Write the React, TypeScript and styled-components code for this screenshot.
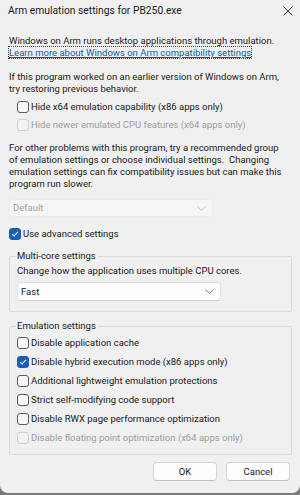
import React from 'react';
import styled, { createGlobalStyle } from 'styled-components';

const GlobalStyle = createGlobalStyle`
  html, body {
    margin: 0;
    padding: 0;
    background: #7a7a7a;
  }
  * {
    box-sizing: border-box;
  }
`;

const Window = styled.div`
  width: 300px;
  height: 493px;
  background: #f0f0f0;
  border-radius: 0 0 8px 8px;
  font-family: Roboto, 'Noto Sans', sans-serif;
  font-size: 9.5px;
  line-height: 12px;
  color: #1a1a1a;
  display: flex;
  flex-direction: column;
  overflow: hidden;
`;

const TitleBar = styled.div`
  height: 31px;
  flex: none;
  display: flex;
  align-items: flex-start;
  justify-content: space-between;
  padding: 5px 7px 0 8px;
`;

const Title = styled.div`
  font-size: 10.3px;
  line-height: 12px;
`;

const Close = styled.svg`
  width: 10px;
  height: 10px;
  margin-top: 1px;
`;

const Body = styled.div`
  padding: 4px 9px 0 9px;
  display: flex;
  flex-direction: column;
  flex: 1;
  & > * {
    flex-shrink: 0;
  }
`;

const Para = styled.p<{ $gap?: number }>`
  margin: 0;
  margin-top: ${(p) => p.$gap ?? 0}px;
  white-space: nowrap;
`;

const Link = styled.a`
  color: #0a5fb4;
  text-decoration: underline;
  outline: 1px dotted #444;
  outline-offset: 0;
  display: inline-block;
  line-height: 11px;
`;

const Row = styled.label<{ $indent?: number; $gap?: number; $disabled?: boolean }>`
  display: flex;
  align-items: center;
  gap: 2px;
  height: 14px;
  margin-left: ${(p) => p.$indent ?? 0}px;
  margin-top: ${(p) => p.$gap ?? 0}px;
  color: ${(p) => (p.$disabled ? '#9d9d9d' : '#1a1a1a')};
  white-space: nowrap;
`;

const Box = styled.span<{ $checked?: boolean; $disabled?: boolean }>`
  width: 12px;
  height: 12px;
  flex: none;
  border-radius: 3px;
  border: 1px solid
    ${(p) => (p.$checked ? '#1c5fb8' : p.$disabled ? '#cfcfcf' : '#5c5c5c')};
  background: ${(p) => (p.$checked ? '#1c5fb8' : p.$disabled ? '#f3f3f3' : '#f7f7f7')};
  display: flex;
  align-items: center;
  justify-content: center;
`;

const Select = styled.div<{ $disabled?: boolean; $indent?: number; $gap?: number; $h?: number }>`
  width: 204px;
  height: ${(p) => p.$h ?? 18}px;
  margin-left: ${(p) => p.$indent ?? 0}px;
  margin-top: ${(p) => p.$gap ?? 0}px;
  background: ${(p) => (p.$disabled ? '#f6f6f6' : '#fdfdfd')};
  border: 1px solid ${(p) => (p.$disabled ? '#ececec' : '#e2e2e2')};
  border-bottom-color: ${(p) => (p.$disabled ? '#ececec' : '#cfcfcf')};
  border-radius: 3px;
  color: ${(p) => (p.$disabled ? '#a3a3a3' : '#1a1a1a')};
  display: flex;
  align-items: center;
  justify-content: space-between;
  padding: 0 6px 0 3px;
`;

const Group = styled.fieldset<{ $gap?: number; $h: number }>`
  margin: ${(p) => p.$gap ?? 0}px 0 0 0;
  padding: 0 0 0 7px;
  height: ${(p) => p.$h}px;
  width: 283px;
  border: 1px solid #dadada;
  border-radius: 2px;
  min-width: 0;
`;

const Legend = styled.legend`
  padding: 0 2px 0 1px;
  margin-left: -1px;
  line-height: 12px;
`;

const Buttons = styled.div`
  display: flex;
  justify-content: flex-end;
  gap: 9px;
  margin-top: 7px;
  padding-right: 1px;
`;

const Button = styled.button`
  width: 64px;
  height: 19px;
  background: #fdfdfd;
  border: 1px solid #d6d6d6;
  border-bottom-color: #c2c2c2;
  border-radius: 4px;
  font: inherit;
  color: #1a1a1a;
  padding: 0;
`;

const Check = () => (
  <svg width="8" height="8" viewBox="0 0 8 8">
    <path d="M1.2 4.2 L3.1 6 L6.8 1.8" fill="none" stroke="#fff" strokeWidth="1.1" />
  </svg>
);

const Chevron = ({ color }: { color: string }) => (
  <svg width="9" height="5" viewBox="0 0 9 5">
    <path d="M0.5 0.5 L4.5 4.3 L8.5 0.5" fill="none" stroke={color} strokeWidth="0.9" />
  </svg>
);

const CheckRow: React.FC<{
  label: string;
  checked?: boolean;
  disabled?: boolean;
  indent?: number;
  gap?: number;
}> = ({ label, checked, disabled, indent, gap }) => (
  <Row $indent={indent} $gap={gap} $disabled={disabled}>
    <Box $checked={checked} $disabled={disabled}>
      {checked && <Check />}
    </Box>
    <span>{label}</span>
  </Row>
);

const emulationOptions = [
  { label: 'Disable application cache' },
  { label: 'Disable hybrid execution mode (x86 apps only)', checked: true },
  { label: 'Additional lightweight emulation protections' },
  { label: 'Strict self-modifying code support' },
  { label: 'Disable RWX page performance optimization' },
  { label: 'Disable floating point optimization (x64 apps only)', disabled: true },
];

export default function App() {
  return (
    <>
      <GlobalStyle />
      <Window>
        <TitleBar>
          <Title>Arm emulation settings for PB250.exe</Title>
          <Close viewBox="0 0 10 10">
            <path d="M0.5 0.5 L9.5 9.5 M9.5 0.5 L0.5 9.5" stroke="#222" strokeWidth="0.9" />
          </Close>
        </TitleBar>
        <Body>
          <Para>Windows on Arm runs desktop applications through emulation.</Para>
          <div>
            <Link>Learn more about Windows on Arm compatibility settings</Link>
          </div>
          <Para $gap={12}>
            If this program worked on an earlier version of Windows on Arm,
            <br />
            try restoring previous behavior.
          </Para>
          <CheckRow label="Hide x64 emulation capability (x86 apps only)" indent={8} gap={5} />
          <CheckRow label="Hide newer emulated CPU features (x64 apps only)" disabled indent={8} gap={4} />
          <Para $gap={10}>
            For other problems with this program, try a recommended group
            <br />
            of emulation settings or choose individual settings.&nbsp; Changing
            <br />
            emulation settings can fix compatibility issues but can make this
            <br />
            program run slower.
          </Para>
          <Select $disabled $gap={9} $h={18}>
            <span>Default</span>
            <Chevron color="#bdbdbd" />
          </Select>
          <CheckRow label="Use advanced settings" checked gap={10} />
          <Group $gap={9} $h={62}>
            <Legend>Multi-core settings</Legend>
            <Para $gap={3}>Change how the application uses multiple CPU cores.</Para>
            <Select $gap={5} $h={19}>
              <span>Fast</span>
              <Chevron color="#6a6a6a" />
            </Select>
          </Group>
          <Group $gap={8} $h={135}>
            <Legend>Emulation settings</Legend>
            {emulationOptions.map((o, i) => (
              <CheckRow
                key={o.label}
                label={o.label}
                checked={o.checked}
                disabled={o.disabled}
                gap={i === 0 ? 4 : 5}
              />
            ))}
          </Group>
          <Buttons>
            <Button>OK</Button>
            <Button>Cancel</Button>
          </Buttons>
        </Body>
      </Window>
    </>
  );
}
